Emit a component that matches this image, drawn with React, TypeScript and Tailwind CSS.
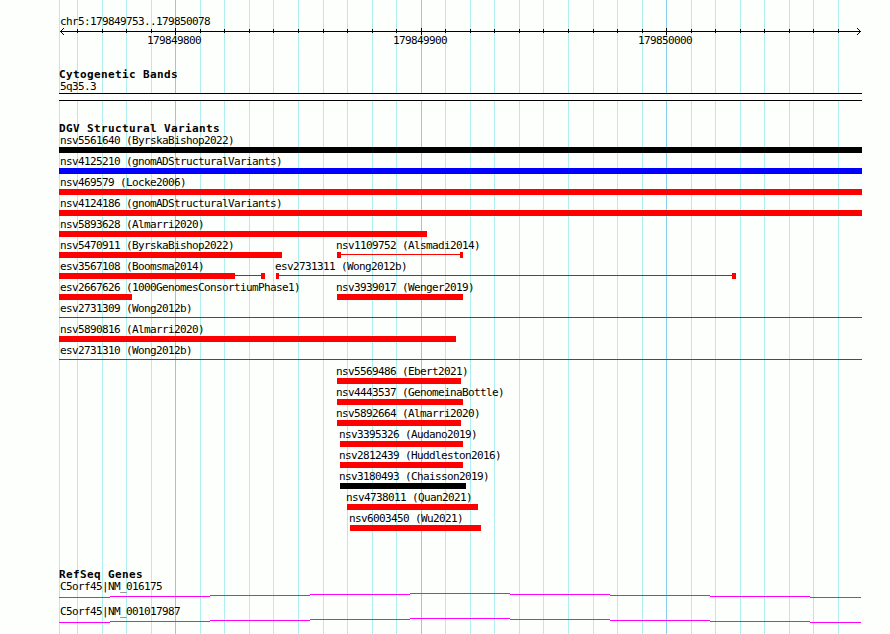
type Feature = {
  name: string;
  start: number;
  end: number;
  // solid parts of the feature, joined by a thin connector
  blocks?: [number, number][];
  color?: "red" | "blue" | "black";
};

const LEFT = 59;
const RIGHT = 862;

const minorLines = [
  59, 77, 102, 126, 151, 200, 224, 249, 273, 298, 323, 347, 372, 396, 445, 470, 494, 519, 543, 568, 593, 617, 642,
  691, 715, 740, 764, 789, 813, 838,
];

const majorLines = [
  { x: 175, label: "179849800" },
  { x: 421, label: "179849900" },
  { x: 666, label: "179850000" },
];

const variants: Feature[][] = [
  [{ name: "nsv5561640 (ByrskaBishop2022)", start: 59, end: 862, color: "black" }],
  [{ name: "nsv4125210 (gnomADStructuralVariants)", start: 59, end: 862, color: "blue" }],
  [{ name: "nsv469579 (Locke2006)", start: 59, end: 862 }],
  [{ name: "nsv4124186 (gnomADStructuralVariants)", start: 59, end: 862 }],
  [{ name: "nsv5893628 (Almarri2020)", start: 59, end: 427 }],
  [
    { name: "nsv5470911 (ByrskaBishop2022)", start: 59, end: 282 },
    { name: "nsv1109752 (Alsmadi2014)", start: 337, end: 463, blocks: [[337, 341], [460, 463]] },
  ],
  [
    { name: "esv3567108 (Boomsma2014)", start: 59, end: 265, blocks: [[59, 235], [261, 265]] },
    { name: "esv2731311 (Wong2012b)", start: 276, end: 736, blocks: [[276, 279], [732, 736]] },
  ],
  [
    { name: "esv2667626 (1000GenomesConsortiumPhase1)", start: 59, end: 132 },
    { name: "nsv3939017 (Wenger2019)", start: 337, end: 463 },
  ],
  [{ name: "esv2731309 (Wong2012b)", start: 59, end: 862, blocks: [] }],
  [{ name: "nsv5890816 (Almarri2020)", start: 59, end: 456 }],
  [{ name: "esv2731310 (Wong2012b)", start: 59, end: 862, blocks: [] }],
  [{ name: "nsv5569486 (Ebert2021)", start: 337, end: 461 }],
  [{ name: "nsv4443537 (GenomeinaBottle)", start: 337, end: 463 }],
  [{ name: "nsv5892664 (Almarri2020)", start: 337, end: 461 }],
  [{ name: "nsv3395326 (Audano2019)", start: 340, end: 463 }],
  [{ name: "nsv2812439 (Huddleston2016)", start: 340, end: 463 }],
  [{ name: "nsv3180493 (Chaisson2019)", start: 340, end: 466, color: "black" }],
  [{ name: "nsv4738011 (Quan2021)", start: 347, end: 478 }],
  [{ name: "nsv6003450 (Wu2021)", start: 350, end: 481 }],
];

const fills = { red: "#ff0000", blue: "#0000ff", black: "#000000" };

export default function App() {
  return (
    <div className="relative h-[634px] w-[890px] overflow-hidden bg-[#fdfffc] font-['DejaVu_Sans_Mono','Liberation_Mono',monospace] text-[11px] leading-[14px] tracking-[-0.622px] whitespace-nowrap text-black">
      <GridLines />
      <main className="relative ml-[59px] w-[803px]">
        <Ruler />

        <section className="mt-[22px]">
          <TrackTitle>Cytogenetic Bands</TrackTitle>
          <p className="h-3 pl-px">5q35.3</p>
          <div className="mt-px h-2 border-y border-black bg-white" />
        </section>

        <section className="mt-[21px]">
          <TrackTitle>DGV Structural Variants</TrackTitle>
          {variants.map((row, i) => (
            <VariantRow key={i} features={row} />
          ))}
        </section>

        <section className="mt-[35px]">
          <TrackTitle>RefSeq Genes</TrackTitle>
          <Gene name="C5orf45|NM_016175" />
          <Gene name="C5orf45|NM_001017987" />
        </section>
      </main>
    </div>
  );
}

function TrackTitle({ children }: { children: string }) {
  return <h2 className="h-3 font-bold tracking-[0.378px]">{children}</h2>;
}

function GridLines() {
  return (
    <svg className="absolute inset-0" width="890" height="634" shapeRendering="crispEdges">
      {minorLines.map((x) => (
        <rect key={x} x={x} y="0" width="1" height="634" fill="#afeeee" />
      ))}
      {majorLines.map(({ x }) => (
        <rect key={x} x={x} y="0" width="1" height="634" fill="#87ceeb" />
      ))}
    </svg>
  );
}

function Ruler() {
  return (
    <header className="pt-[15px]">
      <p className="h-3 pl-px">chr5:179849753..179850078</p>
      <svg className="mt-px block" width="803" height="7" viewBox="59 28 803 7" shapeRendering="crispEdges">
        <rect x="60" y="31" width="801" height="1" />
        {[1, 2, 3].map((d) => (
          <g key={d}>
            <rect x={60 + d} y={31 - d} width="1" height="1" />
            <rect x={60 + d} y={31 + d} width="1" height="1" />
            <rect x={860 - d} y={31 - d} width="1" height="1" />
            <rect x={860 - d} y={31 + d} width="1" height="1" />
          </g>
        ))}
        {minorLines.slice(1).map((x) => (
          <rect key={x} x={x} y="29" width="1" height="4" />
        ))}
        {majorLines.map(({ x }) => (
          <rect key={x} x={x} y="28" width="1" height="7" />
        ))}
      </svg>
      <div className="-mt-px flex h-3">
        {majorLines.map(({ x, label }, i) => {
          const prev = i ? majorLines[i - 1].x + 26 : LEFT;
          return (
            <span key={x} className="w-[54px] shrink-0" style={{ marginLeft: x - 28 - prev }}>
              {label}
            </span>
          );
        })}
      </div>
    </header>
  );
}

function VariantRow({ features }: { features: Feature[] }) {
  return (
    <div className="flex h-[21px]">
      {features.map((f, i) => {
        const prev = i ? features[i - 1].end : LEFT;
        return (
          <div key={f.name} className="shrink-0" style={{ marginLeft: f.start - prev, width: f.end - f.start }}>
            <p className={f.start === LEFT ? "ml-px h-3" : "-ml-px h-3"}>{f.name}</p>
            <Glyph feature={f} />
          </div>
        );
      })}
    </div>
  );
}

function Glyph({ feature }: { feature: Feature }) {
  const { start, end, blocks = [[start, end]], color = "red" } = feature;
  const width = end - start;
  return (
    <svg
      className="mt-px block"
      width={width}
      height="6"
      viewBox={`${start} 0 ${width} 6`}
      fill={fills[color]}
      shapeRendering="crispEdges"
    >
      <rect x={start} y="2" width={width} height="1" />
      {blocks.map(([from, to]) => (
        <rect key={from} x={from} y="0" width={to - from} height="6" />
      ))}
    </svg>
  );
}

// The intron line arcs one pixel per hundred, peaking mid-panel.
function Gene({ name }: { name: string }) {
  const edges = [LEFT, 110, 210, 310, 410, 510, 610, 710, 810, RIGHT - 1];
  return (
    <div className="h-[25px]">
      <p className="h-3 pl-px">{name}</p>
      <svg className="mt-px block" width="803" height="5" viewBox="59 0 803 5" shapeRendering="crispEdges">
        {edges.slice(1).map((to, i) => (
          <rect key={to} x={edges[i]} y={Math.abs(4 - i)} width={to - edges[i]} height="1" fill="#ff00ff" />
        ))}
      </svg>
    </div>
  );
}
